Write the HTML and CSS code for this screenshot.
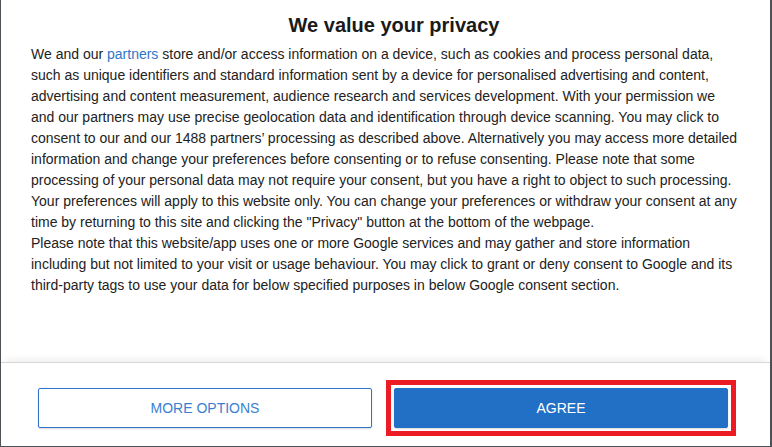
FILE: index.html
```html
<!DOCTYPE html>
<html lang="en">
<head>
<meta charset="utf-8">
<title>We value your privacy</title>
<link rel="stylesheet" href="styles.css">
</head>
<body>
<div class="dialog">
  <div class="content">
    <h1 class="title">We value your privacy</h1>
    <p class="text">We and our <a class="link" href="#">partners</a> store and/or access information on a device, such as cookies and process personal data, such as unique identifiers and standard information sent by a device for personalised advertising and content, advertising and content measurement, audience research and services development. With your permission we and our partners may use precise geolocation data and identification through device scanning. You may click to consent to our and our 1488 partners’ processing as described above. Alternatively you may access more detailed information and change your preferences before consenting or to refuse consenting. Please note that some processing of your personal data may not require your consent, but you have a right to object to such processing. Your preferences will apply to this website only. You can change your preferences or withdraw your consent at any time by returning to this site and clicking the "Privacy" button at the bottom of the webpage.</p>
    <p class="text">Please note that this website/app uses one or more Google services and may gather and store information including but not limited to your visit or usage behaviour. You may click to grant or deny consent to Google and its third-party tags to use your data for below specified purposes in below Google consent section.</p>
  </div>
  <div class="footer">
    <button class="btn btn-outline">MORE OPTIONS</button>
    <button class="btn btn-primary">AGREE</button>
  </div>
</div>
</body>
</html>
```

FILE: styles.css
```css
html, body {
  margin: 0;
  padding: 0;
}
body {
  background: #4d5257;
  width: 772px;
  height: 447px;
  overflow: hidden;
  font-family: "Liberation Sans", Arial, sans-serif;
}
.dialog {
  margin-left: 1px;
  width: 769px;
  height: 446px;
  background: #fff;
  display: flex;
  flex-direction: column;
}
.content {
  flex: 1;
  padding: 14px 29px 0 30px;
}
.title {
  margin: 0 0 7px;
  padding-left: 16px;
  font-size: 20px;
  line-height: 23px;
  font-weight: bold;
  text-align: center;
  color: #1a1a1a;
}
.text {
  margin: 0;
  font-size: 14px;
  line-height: 21px;
  color: #222;
}
.link {
  color: #2f76c9;
  text-decoration: none;
}
.footer {
  height: 84px;
  border-top: 1px solid #d6d6d6;
  box-shadow: 0 -6px 8px -4px rgba(0,0,0,0.08);
  display: flex;
  gap: 22px;
  padding: 25px 42px 0 37px;
  box-sizing: border-box;
}
.btn {
  flex: 1;
  height: 40px;
  border-radius: 2px;
  font-family: "Liberation Sans", Arial, sans-serif;
  font-size: 14px;
  cursor: pointer;
  box-shadow: 0 1px 2px rgba(0,0,0,0.15);
}
.btn-outline {
  background: #fff;
  border: 1px solid #2f76c9;
  color: #3a7fd1;
}
.btn-primary {
  position: relative;
  background: #2270c6;
  border: 1px solid #2270c6;
  color: #fff;
}
.btn-primary::after {
  content: "";
  position: absolute;
  top: -9px;
  left: -9px;
  right: -9px;
  bottom: -9px;
  border: 5px solid #ed1c24;
  pointer-events: none;
}
```
